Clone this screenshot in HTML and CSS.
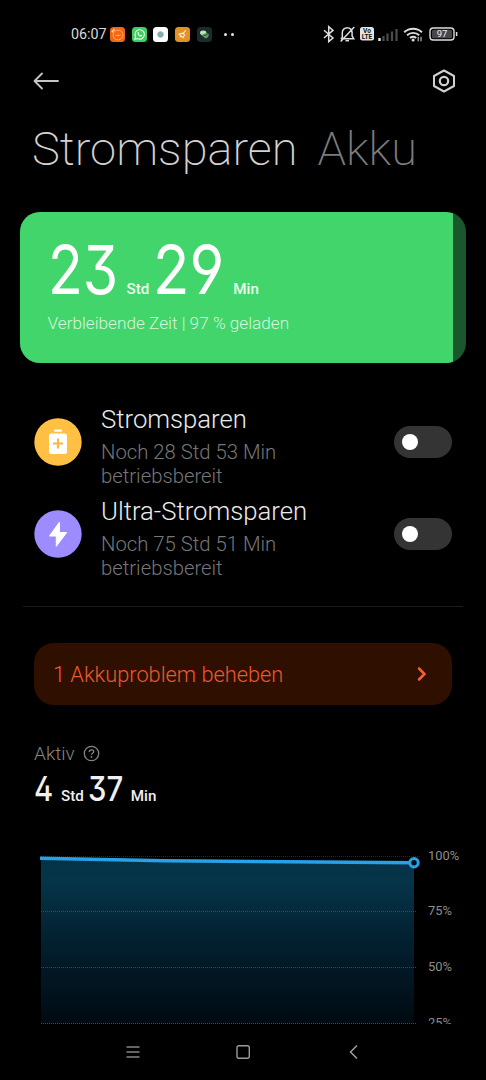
FILE: index.html
```html
<!DOCTYPE html>
<html lang="de">
<head>
<meta charset="utf-8">
<title>Stromsparen</title>
<link rel="stylesheet" href="styles.css">
</head>
<body>
<div class="screen">
  <header class="status">
    <span class="clock">06:07</span>
    <div class="apps">
      <svg width="15" height="15" viewBox="0 0 15 15"><rect width="15" height="15" rx="3.500" fill="#f4660f"/><circle cx="8" cy="8" r="4.900" fill="none" stroke="#ffb27a" stroke-width=".9"/><path d="M5.600 8.700V7.400l1.200.8 1.200-.8 1.200.8 1.200-.8v1.300z" fill="#ffc79c"/><path d="M1.800 5.200 4.600 2" stroke="#ffe0c8" stroke-width="1.300"/></svg>
      <svg width="15" height="15" viewBox="0 0 15 15"><rect width="15" height="15" rx="3.500" fill="#3fcf60"/><path d="M2.900 12.200l.7-2.500a4.700 4.700 0 1 1 1.800 1.800z" fill="none" stroke="#e8ffec" stroke-width="1.100"/><path d="M5.800 5.200c.6-.6 1 .1 1.200.8l-.4.7c.4.8.9 1.200 1.700 1.600l.7-.6 1.200.7c-.4 1.400-1.700 1.200-2.900.5C5.900 8 5 6.500 5.800 5.200z" fill="#fff"/></svg>
      <svg width="15" height="15" viewBox="0 0 15 15"><rect width="15" height="15" rx="3.500" fill="#fff"/><circle cx="7.500" cy="7.500" r="3" fill="#86aaad" stroke="#a9c3c5" stroke-dasharray="1 .6"/></svg>
      <svg width="15" height="15" viewBox="0 0 15 15"><rect width="15" height="15" rx="3.500" fill="#e39227"/><path d="M10.800 3.300 7.800 7M4.200 7.300l3.900 3.400 1.500-2.800-2-1.700zM5.800 8.600l-.7 1.700" fill="none" stroke="#fff0cf" stroke-width="1.100"/></svg>
      <svg width="15" height="15" viewBox="0 0 15 15"><rect width="15" height="15" rx="3.500" fill="#1c2b2b"/><ellipse cx="6.200" cy="5.800" rx="3.200" ry="2.300" fill="#c3dfc4"/><path d="M4.500 8.200c1.800-1.700 5.200-2.600 7.200-1.300.4 2.700-1.700 4.500-3.600 4.300z" fill="#55a85a"/><path d="M6.500 8.700l4-1.200" stroke="#16391f" stroke-width=".8"/></svg>
    </div>
    <span class="more"><i></i><i></i></span>
    <svg class="system" width="138" height="20" viewBox="0 0 138 20" fill="none" stroke="#dedede">
      <path d="M4 6.300 13 14l-4.300 3.600V2.700L13 6.400 4 14" stroke-width="1.500"/>
      <path d="M22.300 14V8.600a4.900 4.900 0 0 1 9.800 0V12l1.600 2.700H20.900zM34.300 3 20.700 17.500" stroke-width="1.500"/><path d="M25.500 16.700h3.500" stroke-width="1.500"/>
      <rect x="40" y="3" width="14" height="13.500" rx="2.500" fill="#e4e4e4" stroke="none"/>
      <text x="47" y="9" class="volte">Vo</text><text x="47" y="15" class="volte">LTE</text>
      <path d="M59.500 14v3" stroke-width="2.400" stroke="#eee"/><path d="M63.500 12V17M67.500 9.500V17M72 7.500V17M76.500 5V17" stroke="#4c4c4c" stroke-width="2.200"/>
      <path d="M84.200 8.200a13 13 0 0 1 17.800 0M87 11.300a9 9 0 0 1 12.200 0M90 14a5 5 0 0 1 6.200 0" stroke-width="1.900"/><circle cx="93.100" cy="16" r="1.500" fill="#dedede" stroke="none"/><path d="M98.200 12.800v4.500M101 12.800v4.500" stroke-width="1"/>
      <rect x="110" y="4" width="24" height="12" rx="3.200" stroke-width="1.400"/><rect x="112" y="5.700" width="20" height="8.600" rx="1.500" fill="#484848" stroke="none"/><path d="M136.600 8v4" stroke-width="1.500"/>
      <text x="122" y="13.300" class="level">97</text>
    </svg>
  </header>

  <nav class="toolbar">
    <svg width="26" height="18" viewBox="0 0 26 18" fill="none" stroke="#c9c5c6" stroke-width="1.800" stroke-linecap="round" stroke-linejoin="round"><path d="M25 9H1.500M9 1.500 1.500 9 9 16.500"/></svg>
    <svg width="24" height="26" viewBox="0 0 24 26" fill="none" stroke="#d0d0d0" stroke-width="2"><path d="M12 2.500 22 8v10L12 23.500 2 18V8z" stroke-linejoin="round"/><circle cx="12" cy="13" r="4.200" stroke-width="2.200"/></svg>
  </nav>

  <div class="tabs"><h1>Stromsparen</h1><span>Akku</span></div>

  <section class="battery">
    <div class="charge">
      <div class="time"><b>23</b><small>Std</small><b>29</b><small>Min</small></div>
      <p>Verbleibende Zeit | 97 % geladen</p>
    </div>
  </section>

  <section class="modes">
    <div class="mode">
      <svg class="badge" width="48" height="48" viewBox="0 0 48 48"><circle cx="24" cy="24" r="23.700" fill="#ffc043"/><rect x="20" y="11.500" width="8" height="2.300" rx="1.100" fill="#fff"/><rect x="15" y="15.500" width="18" height="20.500" rx="2.500" fill="#fff"/><path d="M24 20.500v10M19 25.500h10" stroke="#f5b942" stroke-width="2.200"/></svg>
      <div class="label"><h2>Stromsparen</h2><p>Noch 28 Std 53 Min<br>betriebsbereit</p></div>
      <span class="switch"></span>
    </div>
    <div class="mode">
      <svg class="badge" width="48" height="48" viewBox="0 0 48 48"><circle cx="24" cy="24" r="23.700" fill="#9c8cff"/><path d="M25.500 12 15.500 26h6.800v10.300L32.700 22.500H25.500z" fill="#fff" stroke="#fff" stroke-linejoin="round"/></svg>
      <div class="label"><h2>Ultra-Stromsparen</h2><p>Noch 75 Std 51 Min<br>betriebsbereit</p></div>
      <span class="switch"></span>
    </div>
  </section>

  <hr>

  <a class="problem"><span>1 Akkuproblem beheben</span><svg width="10" height="16" viewBox="0 0 10 16" fill="none" stroke="#f4602e" stroke-width="2.500" stroke-linecap="round"><path d="M2 2.500 7.500 8 2 13.500"/></svg></a>

  <section class="active">
    <div class="caption"><span>Aktiv</span><svg width="17" height="17" viewBox="0 0 17 17" fill="none" stroke="#858585"><circle cx="8.500" cy="8.500" r="7.200" stroke-width="1.300"/><path d="M6.300 7c0-3 4.400-2.800 4.400-.3 0 1.600-2.200 1.500-2.200 3.100" stroke-width="1.300"/><circle cx="8.500" cy="11.900" r=".9" fill="#858585" stroke="none"/></svg></div>
    <div class="time small"><b>4</b><small>Std</small><b>37</b><small>Min</small></div>
  </section>

  <section class="chart">
    <svg width="386" height="184" viewBox="0 0 386 184">
      <defs><linearGradient id="fill" x1="0" y1="0" x2="0" y2="1"><stop offset="0" stop-color="#053247"/><stop offset=".14" stop-color="#063449"/><stop offset=".5" stop-color="#03202f"/><stop offset="1" stop-color="#000a11"/></linearGradient></defs>
      <path d="M7 16.500H386" stroke="#262626" stroke-dasharray="1 1"/>
      <path d="M7 18 130 20.500 380 23V184H7z" fill="url(#fill)"/>
      <path d="M7 71.500H382M7 127.500H382M7 183.500H382" stroke="#3a4a52" stroke-dasharray="1 1"/>
      <path d="M6 18.200 130 20.800 380 22.800" fill="none" stroke="#27a1e8" stroke-width="3.600"/>
      <circle cx="380" cy="22.700" r="4.200" fill="#001018" stroke="#27a1e8" stroke-width="3"/>
    </svg>
    <div class="axis"><span>100%</span><span>75%</span><span>50%</span><span>25%</span></div>
  </section>

  <footer>
    <svg width="14" height="14" viewBox="0 0 14 14" stroke="#858585" stroke-width="1.600"><path d="M.5 2h13M.5 7h13M.5 12h13"/></svg>
    <svg class="home" width="16" height="16" viewBox="0 0 16 16"><rect x="2" y="1.700" width="12.300" height="12.600" rx="2" fill="none" stroke="#9a9a9a" stroke-width="1.400"/></svg>
    <svg width="9" height="16" viewBox="0 0 9 16" fill="none" stroke="#a0a0a0" stroke-width="1.500"><path d="M8 1.500 1.500 8 8 14.500"/></svg>
  </footer>
</div>
</body>
</html>
```

FILE: styles.css
```css
* { box-sizing: border-box; }
body { margin: 0; background: #000; font-family: Roboto, sans-serif; }
h1, h2, p { margin: 0; font-weight: 300; }
svg { display: block; flex: none; }
.screen { width: 486px; height: 1080px; overflow: hidden; display: flex; flex-direction: column; background: #000; }

.status { height: 56px; padding: 12px 28px 0 71px; display: flex; align-items: center; flex: none; }
.clock { width: 39px; font-size: 14.300px; color: #d8d8d8; white-space: nowrap; }
.apps { display: flex; gap: 6.700px; }
.more { display: flex; gap: 4px; margin-left: 12px; flex: 1; }
.more i { width: 3px; height: 3px; border-radius: 50%; background: #e4e4e4; }
.volte { font: 700 6.500px Roboto, sans-serif; text-anchor: middle; fill: #111; stroke: none; }
.level { font: 400 9.500px Roboto, sans-serif; text-anchor: middle; fill: #eee; stroke: none; }

.toolbar { height: 50px; padding: 0 30px 0 33px; display: flex; align-items: center; justify-content: space-between; flex: none; }

.tabs { height: 106px; padding: 16px 0 0 32px; display: flex; gap: 20px; font-size: 47px; line-height: 54px; font-weight: 200; color: #7c7c7c; flex: none; }
.tabs h1 { font-size: inherit; font-weight: 200; color: #d3d1d1; }

.battery { height: 150.500px; margin: 0 20px -.5px; border-radius: 20px; overflow: hidden; background: #1b572c; flex: none; }
.charge { width: 433px; height: 100%; padding: 22px 0 0 27.500px; background: #42d56b; color: #fff; }
.time { display: flex; align-items: baseline; white-space: nowrap; }
.time b { font-family: Inter, sans-serif; font-weight: 400; font-feature-settings: "cv09", "ss01"; transform-origin: 0 100%; }
.charge .time { height: 77.500px; line-height: 71px; }
.charge .time b { width: 79px; font-size: 68px; transform: scaleX(.84); }
.charge .time b + small + b { margin-left: 4px; width: 80px; transform: scaleX(.88); }
.time small { font-size: 15.200px; font-weight: 500; }
.charge .time small { color: #edffed; }
.charge p { font-size: 17.200px; line-height: 22px; color: #d6f7dd; }

.modes { height: 244px; padding: 34px 34px 0; flex: none; }
.mode { height: 92px; display: flex; align-items: center; }
.label { flex: 1; margin: 7px 0 0 19px; }
.label h2 { font-size: 25.700px; line-height: 31px; font-weight: 325; color: #eaeaea; }
.label p { margin-top: 5px; font-size: 20.300px; line-height: 24px; color: #777; }
.switch { width: 58px; height: 32px; padding: 8px; border-radius: 16px; background: #343434; }
.switch::before { content: ""; display: block; width: 16px; height: 16px; border-radius: 50%; background: #fff; }

hr { width: 440px; height: 1px; margin: 0 auto; border: 0; background: #1c1c1c; flex: none; }

.problem { height: 61.500px; margin: 36px 34px -.5px; padding: 1px 25px 0 19px; border-radius: 20px; background: #2f0f00; display: flex; align-items: center; justify-content: space-between; font-size: 21.750px; font-weight: 300; color: #ea5a2c; flex: none; }

.active { height: 136px; padding: 39px 34px 0; flex: none; }
.caption { display: flex; align-items: center; gap: 8px; font-size: 19px; line-height: 22px; font-weight: 300; color: #858585; }
.caption svg { margin-top: -2px; }
.small { height: 44px; line-height: 44px; color: #f0f0f0; margin-top: 2px; }
.small b { width: 27px; font-size: 34px; font-weight: 450; transform: scaleX(.86); }
.small b + small + b { width: 38px; margin-left: 4px; }
.small small + b + small { margin-left: 5px; }

.chart { height: 184px; padding-left: 34px; display: flex; overflow: hidden; flex: none; }
.axis { margin: 7.500px 0 0 8px; font-size: 12.900px; line-height: 16px; color: #8c8c8c; font-weight: 400; }
.axis span { display: block; margin-bottom: 39.700px; }

footer { flex: 1; padding: 0 128px 0 126px; display: flex; align-items: center; justify-content: space-between; }
.home { margin-right: 4px; }
```
